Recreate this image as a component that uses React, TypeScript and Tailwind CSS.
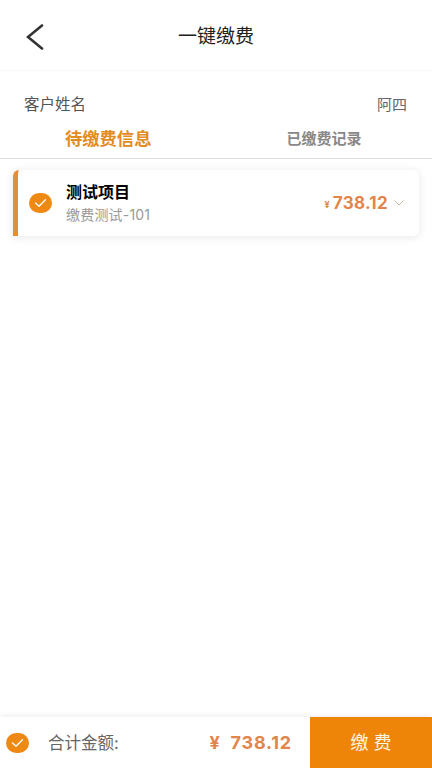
const FONT = "font-['Inter','Noto_Sans_CJK_SC',sans-serif]";

function CheckBadge() {
  return (
    <span className="flex h-[20px] w-[23px] shrink-0 items-center justify-center rounded-full bg-[#ee8a14]">
      <svg width="13" height="10" viewBox="0 0 13 10" fill="none" stroke="#fff" strokeWidth="1.3" strokeLinecap="round" strokeLinejoin="round">
        <path d="M1.5 5 L5 8.2 L11.5 1.8" />
      </svg>
    </span>
  );
}

export default function App() {
  return (
    <div className={`${FONT} flex h-[768px] w-[432px] flex-col overflow-hidden bg-white`}>
      <header className="flex h-[71px] shrink-0 items-center border-b border-[#f7f7f7] pl-[26px] pt-[3px]">
        <svg width="18" height="26" viewBox="0 0 18 26" fill="none" stroke="#333" strokeWidth="2.6" strokeLinecap="round" className="shrink-0">
          <path d="M16 1.5 L2 13 L16 24.5" />
        </svg>
        <h1 className="ml-[134px] text-[19px] leading-[24px] text-[#222]">一键缴费</h1>
      </header>

      <div className="flex items-center justify-between pl-[24px] pr-[25px] pt-[24px]">
        <span className="text-[15.5px] leading-[20px] text-[#555]">客户姓名</span>
        <span className="text-[15px] leading-[20px] text-[#666]">阿四</span>
      </div>

      <div className="mt-[11px] flex h-[33px] shrink-0 items-center border-b border-[#dedede] pb-[7px]">
        <span className="ml-[65px] text-[17.3px] font-bold leading-[22px] text-[#e38a23]">待缴费信息</span>
        <span className="ml-[135px] text-[15px] font-bold leading-[22px] text-[#888]">已缴费记录</span>
      </div>

      <main className="flex-1 px-[13px] pt-[11px]">
        <div className="flex h-[66px] w-[406px] items-center rounded-r-[6px] rounded-tl-[6px] border-l-[5px] border-[#e38f35] bg-white pl-[11px] pr-[15px] shadow-[0_1px_10px_rgba(0,0,0,0.10)]">
          <CheckBadge />
          <div className="ml-[14px] flex flex-col">
            <span className="text-[16px] font-bold leading-[20px] text-black">测试项目</span>
            <span className="mt-[4px] text-[14px] leading-[18px] tracking-[0.2px] text-[#999]">缴费测试-101</span>
          </div>
          <div className="ml-auto flex items-center text-[#e2854a]">
            <span className="mr-[3px] mt-[3px] text-[9px] font-bold leading-none">¥</span>
            <span className="text-[17px] font-bold leading-[20px] tracking-[0.3px]">738.12</span>
            <svg width="10" height="6" viewBox="0 0 10 6" fill="none" stroke="#c9b8a4" strokeWidth="1" className="ml-[6px]">
              <path d="M0.5 0.5 L5 5 L9.5 0.5" />
            </svg>
          </div>
        </div>
      </main>

      <footer className="flex h-[51px] shrink-0 items-center bg-white pl-[6px] shadow-[0_-1px_6px_rgba(0,0,0,0.08)]">
        <CheckBadge />
        <span className="ml-[19px] text-[16.5px] leading-[20px] text-[#666]">合计金额:</span>
        <span className="ml-auto flex items-center text-[18px] font-bold leading-[24px] tracking-[0.8px] text-[#e2854a]">
          <span className="mr-[10px]">¥</span>738.12
        </span>
        <button className="ml-[18px] flex h-full w-[122px] items-center justify-center bg-[#ee8408] text-[18px] text-[#fff4e0]">
          缴 费
        </button>
      </footer>
    </div>
  );
}
